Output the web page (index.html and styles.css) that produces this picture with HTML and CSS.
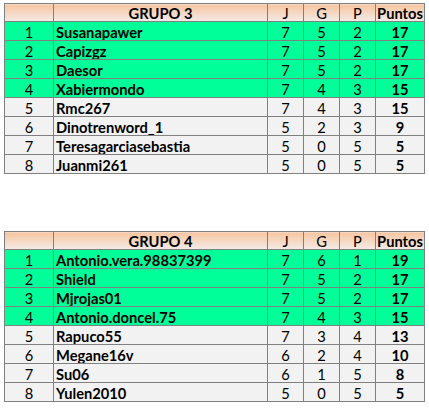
FILE: index.html
```html
<!DOCTYPE html>
<html>
<head>
<meta charset="utf-8">
<link rel="stylesheet" href="styles.css">
</head>
<body>
<div class="page">
<table class="tabla">
  <colgroup><col class="c-pos"><col class="c-name"><col class="c-n"><col class="c-n"><col class="c-n"><col class="c-pts"></colgroup>
  <thead>
    <tr><th></th><th class="b">GRUPO 3</th><th>J</th><th>G</th><th>P</th><th class="b">Puntos</th></tr>
  </thead>
  <tbody>
    <tr class="q"><td>1</td><td class="name">Susanapawer</td><td>7</td><td>5</td><td>2</td><td class="b">17</td></tr>
    <tr class="q"><td>2</td><td class="name">Capizgz</td><td>7</td><td>5</td><td>2</td><td class="b">17</td></tr>
    <tr class="q"><td>3</td><td class="name">Daesor</td><td>7</td><td>5</td><td>2</td><td class="b">17</td></tr>
    <tr class="q"><td>4</td><td class="name">Xabiermondo</td><td>7</td><td>4</td><td>3</td><td class="b">15</td></tr>
    <tr><td>5</td><td class="name">Rmc267</td><td>7</td><td>4</td><td>3</td><td class="b">15</td></tr>
    <tr><td>6</td><td class="name">Dinotrenword_1</td><td>5</td><td>2</td><td>3</td><td class="b">9</td></tr>
    <tr><td>7</td><td class="name">Teresagarciasebastia</td><td>5</td><td>0</td><td>5</td><td class="b">5</td></tr>
    <tr><td>8</td><td class="name">Juanmi261</td><td>5</td><td>0</td><td>5</td><td class="b">5</td></tr>
  </tbody>
</table>
<table class="tabla">
  <colgroup><col class="c-pos"><col class="c-name"><col class="c-n"><col class="c-n"><col class="c-n"><col class="c-pts"></colgroup>
  <thead>
    <tr><th></th><th class="b">GRUPO 4</th><th>J</th><th>G</th><th>P</th><th class="b">Puntos</th></tr>
  </thead>
  <tbody>
    <tr class="q"><td>1</td><td class="name">Antonio.vera.98837399</td><td>7</td><td>6</td><td>1</td><td class="b">19</td></tr>
    <tr class="q"><td>2</td><td class="name">Shield</td><td>7</td><td>5</td><td>2</td><td class="b">17</td></tr>
    <tr class="q"><td>3</td><td class="name">Mjrojas01</td><td>7</td><td>5</td><td>2</td><td class="b">17</td></tr>
    <tr class="q"><td>4</td><td class="name">Antonio.doncel.75</td><td>7</td><td>4</td><td>3</td><td class="b">15</td></tr>
    <tr><td>5</td><td class="name">Rapuco55</td><td>7</td><td>3</td><td>4</td><td class="b">13</td></tr>
    <tr><td>6</td><td class="name">Megane16v</td><td>6</td><td>2</td><td>4</td><td class="b">10</td></tr>
    <tr><td>7</td><td class="name">Su06</td><td>6</td><td>1</td><td>5</td><td class="b">8</td></tr>
    <tr><td>8</td><td class="name">Yulen2010</td><td>5</td><td>0</td><td>5</td><td class="b">5</td></tr>
  </tbody>
</table>
</div>
</body>
</html>
```
FILE: styles.css
```css
html, body {
  margin: 0;
  padding: 0;
  background: #ffffff;
}
.page {
  padding: 3px 0 0 4px;
  display: flex;
  flex-direction: column;
  gap: 57px;
  align-items: flex-start;
}
.tabla {
  border-collapse: collapse;
  table-layout: fixed;
  width: 421px;
  font-family: Lato, "Liberation Sans", sans-serif;
  font-size: 14.7px;
  color: #000;
}
.c-pos { width: 49px; }
.c-name { width: 214px; }
.c-n { width: 36px; }
.c-pts { width: 49px; }
.tabla th, .tabla td {
  border: 1px solid #808080;
  padding: 0;
  text-align: center;
  vertical-align: bottom;
  line-height: 16px;
  white-space: nowrap;
  overflow: hidden;
}
.tabla th {
  height: 17px;
  font-weight: normal;
  background: linear-gradient(to bottom, #f7c59f, #f3ebe7);
}
.tabla td {
  height: 18px;
  background: #f2f2f2;
}
.tabla tr.q td {
  background: #00ff99;
}
.tabla .b { font-weight: bold; }
.tabla td.name {
  text-align: left;
  padding-left: 2px;
  font-weight: bold;
}
```
